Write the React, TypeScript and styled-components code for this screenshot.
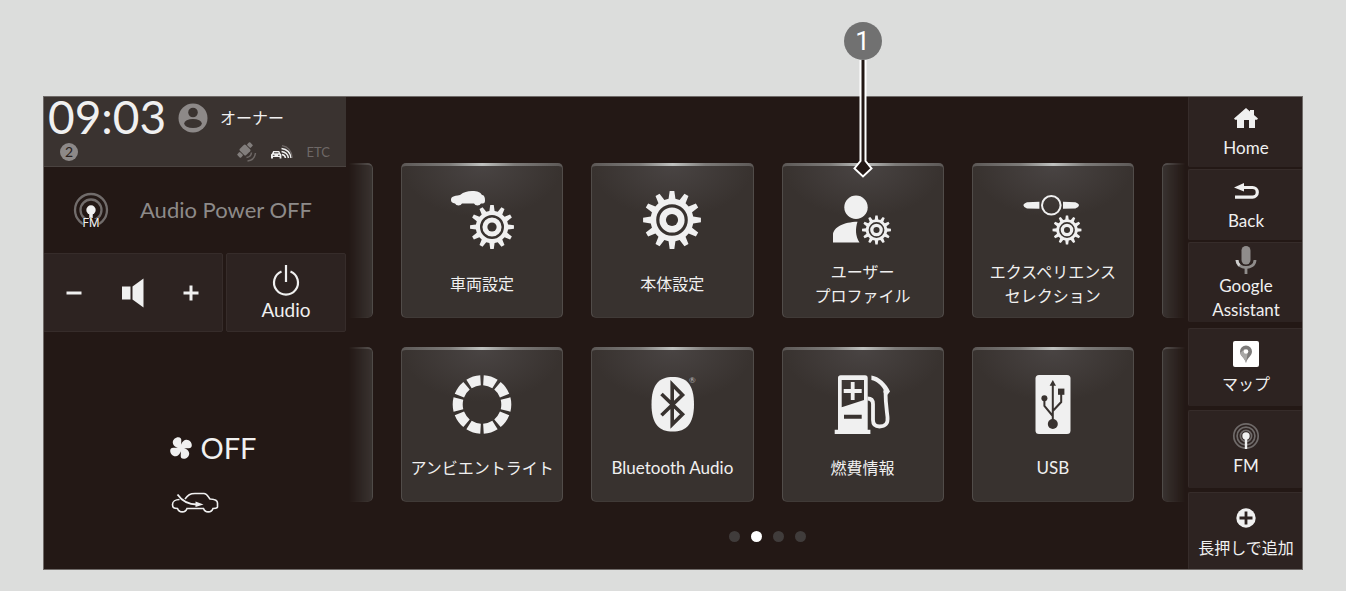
import React from "react";
import styled, { createGlobalStyle, css } from "styled-components";

const GlobalStyle = createGlobalStyle`
  * { box-sizing: border-box; }
  body {
    margin: 0;
    background: #dcdddc;
    color: #f0f0f0;
    font-family: Lato, "Noto Sans CJK JP", sans-serif;
  }
  button {
    margin: 0;
    padding: 0;
    border: 0;
    background: none;
    color: inherit;
    font: inherit;
  }
  svg { display: block; flex: none; }
`;

const Page = styled.main`
  padding: 96px 43px 21px;
`;

const Screen = styled.section`
  display: grid;
  grid-template-columns: 303px minmax(0, 1fr) 115px;
  background: #231815;
  outline: 1px solid #6f6a68;
  outline-offset: -1px;
`;

/* ---------- Left column ---------- */

const LeftColumn = styled.div`
  display: flex;
  flex-direction: column;
`;

const StatusBar = styled.header`
  background: #3a3330;
  border-bottom: 1px solid #4a4340;
  height: 71px;
`;

const StatusTop = styled.div`
  display: flex;
  align-items: center;
  height: 44px;
  padding-left: 5px;
`;

const Clock = styled.time`
  width: 130px;
  padding-bottom: 2px;
  font-size: 46px;
  line-height: 42px;
`;

const OwnerName = styled.span`
  margin-left: 12px;
  font-size: 16px;
  line-height: 24px;
`;

const StatusBottom = styled.div`
  display: flex;
  align-items: center;
  height: 24px;
  padding: 0 16px 0 17px;
`;

const CountBadge = styled.span`
  width: 18px;
  height: 18px;
  margin-right: auto;
  border-radius: 50%;
  background: #8d8988;
  color: #2a2220;
  font-size: 14px;
  line-height: 18px;
  text-align: center;
`;

const StatusIcons = styled.div`
  display: flex;
  align-items: center;
  gap: 14px;
  color: #6e6866;
  font-size: 13px;
`;

const NowPlaying = styled.div`
  display: flex;
  align-items: center;
  height: 86px;
  padding-left: 30px;
  gap: 31px;
  color: #8d8a89;
  font-size: 22px;
  line-height: 28px;
`;

const TowerBadge = styled.div`
  position: relative;
`;

const TowerLabel = styled.span`
  position: absolute;
  right: 0;
  bottom: -2px;
  left: 0;
  color: #f0f0f0;
  font-family: Roboto, sans-serif;
  font-size: 12px;
  line-height: 14px;
  text-align: center;
  text-shadow: 0 0 1px #231815, 0 0 1px #231815;
`;

const Controls = styled.div`
  display: grid;
  grid-template-columns: 3fr 2fr;
  gap: 3px;
  height: 79px;
`;

const panel = css`
  background: #2d2321;
  border: 1px solid #362c2a;
  border-radius: 2px;
`;

const VolumePanel = styled.div`
  ${panel}
  display: flex;
  align-items: center;
  justify-content: space-between;
  padding: 0 21px 0 20px;
`;

const PowerButton = styled.button`
  ${panel}
  display: flex;
  flex-direction: column;
  align-items: center;
  justify-content: center;
  gap: 2px;
  font-size: 19px;
  line-height: 24px;
`;

const Climate = styled.div`
  display: flex;
  flex: 1;
  flex-direction: column;
  align-items: center;
  gap: 26px;
  padding-top: 98px;
`;

const FanState = styled.div`
  display: flex;
  align-items: center;
  gap: 8px;
  padding-left: 40px;
  padding-right: 2px;
  font-size: 29px;
  line-height: 36px;
`;

const ClimateCar = styled.div`
  height: 22px;
`;

/* ---------- Menu pages ---------- */

const Menu = styled.div`
  display: flex;
  flex-direction: column;
  padding-top: 67px;
`;

const CardGrid = styled.div`
  display: grid;
  grid-template-columns: 27px repeat(4, minmax(0, 1fr)) 26px;
  gap: 29px 28px;
`;

const cardFrame = css`
  border: 1px solid #514c49;
  border-bottom-color: #403a37;
  border-radius: 5px;
`;

const CardCell = styled.div`
  position: relative;
`;

const Card = styled.button`
  ${cardFrame}
  display: flex;
  flex-direction: column;
  align-items: center;
  gap: 8px;
  width: 100%;
  padding: 22px 0 9px;
  border-top: 3px solid transparent;
  background:
    radial-gradient(ellipse 50% 34% at 50% 0, #494443, #38322f) padding-box,
    radial-gradient(ellipse 50% 100% at 50% 0, #c0c2c0 0%, #7d7b79 40%, #5c5856 100%) border-box;
`;

const CardLabel = styled.span<{ $latin: boolean }>`
  display: flex;
  flex-direction: column;
  align-items: center;
  justify-content: center;
  height: 48px;
  font-size: ${({ $latin }) => ($latin ? 17 : 16)}px;
  line-height: 24px;
  white-space: nowrap;
`;

const EdgeCard = styled.div<{ $side: "left" | "right" }>`
  ${cardFrame}
  border-top: 2px solid #5c5856;
  background: #3a3431;
  ${({ $side }) =>
    $side === "left"
      ? css`
          border-left: 0;
          border-radius: 0 5px 5px 0;
          mask-image: linear-gradient(to right, transparent 10%, #000);
        `
      : css`
          border-right: 0;
          border-radius: 5px 0 0 5px;
          mask-image: linear-gradient(to left, transparent 10%, #000);
        `}
`;

const Dots = styled.nav`
  display: flex;
  justify-content: center;
  gap: 11px;
  padding-top: 29px;
`;

const Dot = styled.button<{ $active: boolean }>`
  width: 11px;
  height: 11px;
  border-radius: 50%;
  background: ${({ $active }) => ($active ? "#ffffff" : "#403c3b")};
`;

/* ---------- Numbered pointer over a card ---------- */

const Callout = styled.div`
  position: absolute;
  bottom: 100%;
  left: 50%;
  display: flex;
  flex-direction: column;
  align-items: center;
  margin-bottom: -15px;
  transform: translateX(-50%);
`;

const CalloutNumber = styled.span`
  width: 38px;
  height: 38px;
  border-radius: 50%;
  background: #717171;
  color: #fff;
  font-family: Roboto, sans-serif;
  font-size: 26px;
  line-height: 38px;
  text-align: center;
`;

/* ---------- Right column ---------- */

const SideColumn = styled.nav`
  display: flex;
  flex-direction: column;
  gap: 6px;
`;

const SideGroup = styled.div<{ $gap: number }>`
  display: grid;
  gap: ${({ $gap }) => $gap}px;
`;

const SideButton = styled.button<{ $height: number; $compact?: boolean }>`
  ${panel}
  display: flex;
  flex-direction: column;
  align-items: center;
  justify-content: center;
  gap: ${({ $compact }) => ($compact ? 0 : 4)}px;
  min-height: ${({ $height }) => $height}px;
  padding-top: ${({ $compact }) => ($compact ? 3 : 0)}px;
  border-width: 1px 0 0 1px;
  line-height: 24px;
`;

const SideLabel = styled.span<{ $jp?: boolean }>`
  display: flex;
  flex-direction: column;
  align-items: center;
  font-size: ${({ $jp }) => ($jp ? 16 : 17)}px;
`;

/* ---------- Icons ---------- */

const INK = "#f0f0f0";
const FACE = "#38322f";

function gearPath(cx: number, cy: number, r: number) {
  const points: string[] = [];
  for (let i = 0; i < 12; i++) {
    const mid = (i * Math.PI) / 6;
    const corners: [number, number][] = [
      [0.74, -0.16],
      [1, -0.08],
      [1, 0.08],
      [0.74, 0.16],
    ];
    for (const [k, a] of corners) {
      points.push(
        `${(cx + r * k * Math.sin(mid + a)).toFixed(2)} ${(cy - r * k * Math.cos(mid + a)).toFixed(2)}`
      );
    }
  }
  return `M${points.join("L")}Z`;
}

const Gear = ({ cx, cy, r }: { cx: number; cy: number; r: number }) => (
  <g>
    <path d={gearPath(cx, cy, r)} fill={INK} />
    <circle cx={cx} cy={cy} r={r * 0.49} fill="none" stroke={FACE} strokeWidth={r * 0.11} />
    <circle cx={cx} cy={cy} r={r * 0.21} fill={FACE} />
  </g>
);

const CardIcon = ({ children }: { children: React.ReactNode }) => (
  <svg width="64" height="64" viewBox="0 0 64 64" aria-hidden="true">
    {children}
  </svg>
);

const VehicleIcon = () => (
  <CardIcon>
    <path
      d="M1 12c0-3 2-4 9-5 4-3 7-4 12-4 6 0 8 1 10 4 2 0 3 2 3 5 0 2 0 3-2 3.500h-2a3.800 3.200 0 0 1-7 0H12a3.800 3.200 0 0 1-7 0C2 15 1 14 1 12Z"
      fill={INK}
    />
    <Gear cx={42} cy={39} r={22} />
  </CardIcon>
);

const SystemIcon = () => (
  <CardIcon>
    <Gear cx={32} cy={32} r={29} />
  </CardIcon>
);

const ProfileIcon = () => (
  <CardIcon>
    <circle cx="25" cy="19.300" r="11.700" fill={INK} />
    <path d="M2 54.500V47c0-8 11-13 24.500-13.300-2.200 7-2.200 14 2 20.800Z" fill={INK} />
    <Gear cx={45.5} cy={42} r={14.5} />
  </CardIcon>
);

const ExperienceIcon = () => (
  <CardIcon>
    <path d="M18.400 13.800v7L6 20.500Q2.400 19 2.400 17.300T6 14.200ZM42 13.800v7l12.400-.3q3.600-1.500 3.600-3.200t-3.600-3.100Z" fill={INK} />
    <circle cx="30.300" cy="17.300" r="9.300" fill="none" stroke={INK} strokeWidth="2" />
    <Gear cx={46} cy={42} r={14.5} />
  </CardIcon>
);

const AmbientIcon = () => (
  <CardIcon>
    <circle
      cx="32"
      cy="32.500"
      r="24.300"
      fill="none"
      stroke={INK}
      strokeWidth="10"
      pathLength={100}
      strokeDasharray="8 2"
      strokeDashoffset="-1"
      transform="rotate(-90 32 32.500)"
    />
  </CardIcon>
);

const BluetoothIcon = () => (
  <CardIcon>
    <path d="M32.700 5C46 5 54 12 54 32.300S46 59.600 32.700 59.600 11.500 52.500 11.500 32.300 19.500 5 32.700 5Z" fill={INK} />
    <path d="M21.500 22 42.500 42.200 32.200 52.500V12.500L42.500 23 21.500 43.200" fill="none" stroke={FACE} strokeWidth="3.600" />
    <text x="49" y="11" fill="#b9b7b6" fontSize="8">®</text>
  </CardIcon>
);

const FuelIcon = () => (
  <CardIcon>
    <path
      fillRule="evenodd"
      d="M7 57.700V6q0-2.700 2.700-2.700H34q2.700 0 2.700 2.700v51.700h2.700V62H3.700v-4.300ZM10.700 8v27.300L33 28V8ZM13 42.700v4h17.700v-4Z"
      fill={INK}
    />
    <path d="M21.700 10v18M12.700 19h18" stroke={INK} strokeWidth="3.800" />
    <path
      d="M36.500 26.500q5.500 0 5.500 5.500v16q0 6.500 6.500 6.500 9 0 8-9.500c-1-9-2-14-2-26"
      fill="none"
      stroke={INK}
      strokeWidth="3.800"
    />
    <path d="M40.400 3.500C48 4.500 56 12 59 19.500l-2.500 3.200-4-2.200v-3C50 13 45.500 9 40.400 8Z" fill={INK} />
  </CardIcon>
);

const UsbIcon = () => (
  <CardIcon>
    <rect x="14.500" y="3" width="35" height="59" rx="3.500" fill={INK} />
    <g fill={FACE}>
      <path d="M31.800 8 35 13.800h-6.400Z" />
      <circle cx="31.800" cy="52" r="5" />
      <circle cx="23.400" cy="26.300" r="3" />
      <path d="M37 16.600h6.400v6.200H37Z" />
    </g>
    <path d="M31.800 12v38M23.400 26v8l8.400 10M40.200 22v8l-8.400 9" fill="none" stroke={FACE} strokeWidth="2" />
  </CardIcon>
);

const AvatarIcon = () => (
  <svg width="30" height="30" viewBox="0 0 30 30" aria-hidden="true">
    <circle cx="15" cy="15" r="14.500" fill="#8d8988" />
    <circle cx="15" cy="9.500" r="4.800" fill="#3a3330" />
    <ellipse cx="15" cy="20.500" rx="8.800" ry="4.500" fill="#3a3330" />
  </svg>
);

const SatelliteIcon = () => (
  <svg width="20" height="20" viewBox="0 0 20 20" aria-hidden="true">
    <g fill="#827e7c" transform="rotate(-45 8 8)">
      <rect x="3.800" y="3.500" width="8.400" height="9" rx="1.500" />
      <rect x="-1" y="5.500" width="4" height="5" rx="1" />
      <rect x="13" y="5.500" width="4" height="5" rx="1" />
    </g>
    <path d="M9.500 15.500q4.500-.5 5-5M10.500 19q7-.8 8-8" fill="none" stroke="#6e6866" strokeWidth="1.500" />
  </svg>
);

const CarSignalIcon = () => (
  <svg width="22" height="16" viewBox="0 0 22 16" aria-hidden="true">
    <path d="M0 14.500v-4l1-1L2.200 7h6l1.200 2.500 1 1v4H8.600V13H2v1.500Z" fill={INK} />
    <path d="M3 8.800h4.500M1.800 11.300h1.700M7 11.300h1.700" stroke="#3a3330" />
    <g fill="none" strokeWidth="1.500">
      <path d="M11 10.500q3 .5 3.500 3.500M10.500 7.500q6 .8 7 6.500M10.500 4.500q8.500 1 9.500 9.500" stroke={INK} />
      <path d="M11 1.700q9 1.500 10.300 12" stroke="#6e6866" strokeWidth="1.200" />
    </g>
  </svg>
);

const RadioTower = () => (
  <svg width="36" height="36" viewBox="0 0 36 36" aria-hidden="true">
    <g fill="none" stroke="#716c6b" strokeWidth="2.300">
      <circle cx="18" cy="18" r="16" />
      <circle cx="18" cy="18" r="10.500" />
    </g>
    <circle cx="18" cy="18" r="4.700" fill={INK} />
    <path d="M18 18v8" stroke={INK} strokeWidth="3.500" />
    <path d="M10 27h16v9H10Z" fill="#231815" />
  </svg>
);

const SideTower = () => (
  <svg width="28" height="28" viewBox="0 0 28 28" aria-hidden="true">
    <g fill="none" stroke="#6f6a69" strokeWidth="1.700">
      <circle cx="14" cy="14" r="12.200" />
      <circle cx="14" cy="14" r="8.900" />
      <circle cx="14" cy="14" r="5.600" />
    </g>
    <circle cx="14" cy="14" r="3.700" fill={INK} />
    <path d="M14 14v13" stroke={INK} strokeWidth="2.400" />
  </svg>
);

const StepIcon = ({ plus }: { plus?: boolean }) => (
  <svg width="20" height="20" viewBox="0 0 20 20" aria-hidden="true">
    <path d={plus ? "M2.500 10h15M10 2.500v15" : "M2.500 10h15"} stroke={INK} strokeWidth="3" />
  </svg>
);

const SpeakerIcon = () => (
  <svg width="22" height="30" viewBox="0 0 22 30" aria-hidden="true">
    <path d="M0 8.500h8.500v13H0ZM10.500 8.500 21.500.5v29l-11-8Z" fill={INK} />
  </svg>
);

const PowerIcon = () => (
  <svg width="30" height="32" viewBox="0 0 30 32" aria-hidden="true">
    <path d="M15 1v17M10.500 7.500a12 12 0 1 0 9 0" fill="none" stroke={INK} strokeWidth="2.200" />
  </svg>
);

const FanIcon = () => (
  <svg width="22" height="22" viewBox="0 0 22 22" aria-hidden="true">
    {[0, 90, 180, 270].map((angle) => (
      <path
        key={angle}
        d="M11.500 12C8 11.500 3 9.500 2.800 5.800 2.600 2.500 5.500.2 8.300.2c2.200 0 3.200 1.300 3 3.600-.2 2.500-.3 5 .2 8.200Z"
        fill={INK}
        transform={`rotate(${angle} 11 11)`}
      />
    ))}
  </svg>
);

const RecirculateIcon = () => (
  <svg width="48" height="22" viewBox="0 0 48 22" aria-hidden="true">
    <path
      d="M14 7c3-4 5-5.500 10-5.500h9c3 0 4 3 6 5.500 5 .2 7.500 1 7.500 4v4q-.5 1.500-4.500 1.500c-1.500 4.500-8 4.500-9.500 0H16c-1.500 4.500-8 4.500-9.500 0-4 0-5-1-5-4 0-3 3-5 7-5"
      fill="none"
      stroke={INK}
      strokeWidth="1.600"
    />
    <path d="M6.500 2.500C11 9 17 12.500 26 12.500" fill="none" stroke={INK} strokeWidth="1.800" />
    <path d="m24.500 9.500 8 3-8 2.500Z" fill={INK} />
  </svg>
);

const HomeIcon = () => (
  <svg width="28" height="28" viewBox="0 0 28 28" aria-hidden="true">
    <path d="M2 14.500 14 4l4 3.500V6h4v5l4 3.500-1 1.200h-2V24h-6v-8h-5v8H5v-8.300H3Z" fill={INK} />
  </svg>
);

const BackIcon = () => (
  <svg width="28" height="28" viewBox="0 0 28 28" aria-hidden="true">
    <path d="M10 10.500h10.500a4.800 4.800 0 0 1 0 9.600H3" fill="none" stroke={INK} strokeWidth="3.200" />
    <path d="M2 10.500 12 6v8.500Z" fill={INK} />
  </svg>
);

const MicIcon = () => (
  <svg width="28" height="28" viewBox="0 0 28 28" aria-hidden="true">
    <rect x="9.500" y="0" width="9" height="18.500" rx="4.500" fill="#8f8c8b" />
    <path d="M5 14c0 10 18 10 18 0M14 21v7" fill="none" stroke="#8f8c8b" strokeWidth="2.800" />
    <path d="M5 14q0 3 2.500 5.500" fill="none" stroke="#d0cfce" strokeWidth="2.800" />
  </svg>
);

const MapIcon = () => (
  <svg width="28" height="28" viewBox="0 0 28 28" aria-hidden="true">
    <rect x="1" y="1" width="26" height="26" rx="2" fill="#fff" />
    <path d="M14 23c-1-5-6-7-6-11.500a6 6 0 0 1 12 0C20 16 15 18 14 23Z" fill="#7d7b7a" />
    <path d="M14 23c-1-5-5.500-7-6-10l4.500-4 3 5Z" fill="#a9a8a7" />
    <circle cx="14" cy="11.500" r="2.300" fill="#fff" />
  </svg>
);

const AddIcon = () => (
  <svg width="28" height="28" viewBox="0 0 28 28" aria-hidden="true">
    <circle cx="14" cy="14" r="9.700" fill={INK} />
    <path d="M7.500 14h13M14 7.500v13" stroke="#2d2321" strokeWidth="2.800" />
  </svg>
);

const PointerLine = () => (
  <svg width="20" height="118" viewBox="0 0 20 118" aria-hidden="true">
    <path d="M7.500 0v100L1.500 108.500l8.500 8.500 8.500-8.500-6-8.500V0Z" fill="#231815" />
    <path d="M7.500 0v101L1.500 108.500l8.500 8 8.500-8-6-7.500V0" fill="none" stroke="#fff" strokeWidth="2" />
  </svg>
);

/* ---------- Content ---------- */

type MenuItem = { lines: string[]; icon: React.ReactNode; latin?: boolean; callout?: number };

const topRow: MenuItem[] = [
  { lines: ["車両設定"], icon: <VehicleIcon /> },
  { lines: ["本体設定"], icon: <SystemIcon /> },
  { lines: ["ユーザー", "プロファイル"], icon: <ProfileIcon />, callout: 1 },
  { lines: ["エクスペリエンス", "セレクション"], icon: <ExperienceIcon /> },
];

const bottomRow: MenuItem[] = [
  { lines: ["アンビエントライト"], icon: <AmbientIcon /> },
  { lines: ["Bluetooth Audio"], icon: <BluetoothIcon />, latin: true },
  { lines: ["燃費情報"], icon: <FuelIcon /> },
  { lines: ["USB"], icon: <UsbIcon />, latin: true },
];

const MenuRow = ({ items }: { items: MenuItem[] }) => (
  <>
    <EdgeCard $side="left" />
    {items.map(({ lines, icon, latin = false, callout }) => (
      <CardCell key={lines[0]}>
        <Card type="button">
          {icon}
          <CardLabel $latin={latin}>
            {lines.map((line) => (
              <span key={line}>{line}</span>
            ))}
          </CardLabel>
        </Card>
        {callout && (
          <Callout>
            <CalloutNumber>{callout}</CalloutNumber>
            <PointerLine />
          </Callout>
        )}
      </CardCell>
    ))}
    <EdgeCard $side="right" />
  </>
);

export default function App() {
  return (
    <>
      <GlobalStyle />
      <Page>
        <Screen>
          <LeftColumn>
            <StatusBar>
              <StatusTop>
                <Clock>09:03</Clock>
                <AvatarIcon />
                <OwnerName>オーナー</OwnerName>
              </StatusTop>
              <StatusBottom>
                <CountBadge>2</CountBadge>
                <StatusIcons>
                  <SatelliteIcon />
                  <CarSignalIcon />
                  <span>ETC</span>
                </StatusIcons>
              </StatusBottom>
            </StatusBar>
            <NowPlaying>
              <TowerBadge>
                <RadioTower />
                <TowerLabel>FM</TowerLabel>
              </TowerBadge>
              <span>Audio Power OFF</span>
            </NowPlaying>
            <Controls>
              <VolumePanel>
                <button type="button" aria-label="Volume down">
                  <StepIcon />
                </button>
                <SpeakerIcon />
                <button type="button" aria-label="Volume up">
                  <StepIcon plus />
                </button>
              </VolumePanel>
              <PowerButton type="button">
                <PowerIcon />
                Audio
              </PowerButton>
            </Controls>
            <Climate>
              <FanState>
                <FanIcon />
                <span>OFF</span>
              </FanState>
              <ClimateCar>
                <RecirculateIcon />
              </ClimateCar>
            </Climate>
          </LeftColumn>

          <Menu>
            <CardGrid>
              <MenuRow items={topRow} />
              <MenuRow items={bottomRow} />
            </CardGrid>
            <Dots aria-label="Pages">
              {[1, 2, 3, 4].map((page) => (
                <Dot key={page} type="button" $active={page === 2} aria-label={`Page ${page}`} />
              ))}
            </Dots>
          </Menu>

          <SideColumn>
            <SideGroup $gap={2}>
              <SideButton type="button" $height={71}>
                <HomeIcon />
                <SideLabel>Home</SideLabel>
              </SideButton>
              <SideButton type="button" $height={71}>
                <BackIcon />
                <SideLabel>Back</SideLabel>
              </SideButton>
              <SideButton type="button" $height={80} $compact>
                <MicIcon />
                <SideLabel>
                  <span>Google</span>
                  <span>Assistant</span>
                </SideLabel>
              </SideButton>
            </SideGroup>
            <SideGroup $gap={4}>
              <SideButton type="button" $height={78}>
                <MapIcon />
                <SideLabel $jp>マップ</SideLabel>
              </SideButton>
              <SideButton type="button" $height={78}>
                <SideTower />
                <SideLabel>FM</SideLabel>
              </SideButton>
              <SideButton type="button" $height={78}>
                <AddIcon />
                <SideLabel $jp>長押しで追加</SideLabel>
              </SideButton>
            </SideGroup>
          </SideColumn>
        </Screen>
      </Page>
    </>
  );
}
